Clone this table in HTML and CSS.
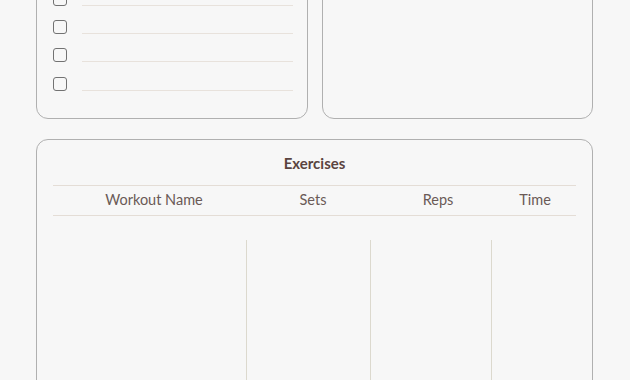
FILE: index.html
```html
<!DOCTYPE html>
<html lang="en">
<head>
<meta charset="utf-8">
<title>Workout Planner</title>
<link rel="stylesheet" href="styles.css">
</head>
<body>
<div class="page">
  <div class="top-row">
    <section class="card checklist">
      <div class="check-row"><span class="box"></span><span class="line"></span></div>
      <div class="check-row"><span class="box"></span><span class="line"></span></div>
      <div class="check-row"><span class="box"></span><span class="line"></span></div>
      <div class="check-row"><span class="box"></span><span class="line"></span></div>
    </section>
    <section class="card notes"></section>
  </div>
  <section class="card exercises">
    <h2 class="title">Exercises</h2>
    <div class="table-head">
      <div class="th">Workout Name</div>
      <div class="th">Sets</div>
      <div class="th">Reps</div>
      <div class="th">Time</div>
    </div>
    <div class="table-body">
      <div class="td"></div>
      <div class="td"></div>
      <div class="td"></div>
      <div class="td"></div>
    </div>
  </section>
</div>
</body>
</html>
```

FILE: styles.css
```css
html, body {
  margin: 0;
  padding: 0;
  background: #f7f7f7;
  overflow: hidden;
}
body {
  font-family: "Lato", "Noto Sans", sans-serif;
  color: #5b4642;
}
.page {
  width: 557px;
  padding-left: 36px;
  margin-top: -38px;
}
.top-row {
  display: grid;
  grid-template-columns: 1fr 1fr;
  gap: 14px;
}
.card {
  border: 1.5px solid #b0b0b0;
  border-radius: 12px;
  box-sizing: border-box;
}
.checklist {
  padding: 29px 14px 27px 16px;
  display: flex;
  flex-direction: column;
  gap: 14px;
}
.check-row {
  display: flex;
  align-items: flex-end;
  gap: 15px;
}
.check-row:last-child {
  margin-top: 1px;
}
.box {
  width: 14px;
  height: 14px;
  box-sizing: border-box;
  border: 1px solid #727272;
  border-radius: 3px;
  flex: none;
}
.line {
  flex: 1;
  border-bottom: 1.5px solid #e8e2dc;
}
.exercises {
  margin-top: 20px;
  padding: 13px 16px 0;
  height: 280px;
}
.title {
  margin: 0;
  text-align: center;
  font-size: 15px;
  line-height: 20px;
  font-weight: 700;
  color: #5a4440;
}
.table-head {
  margin-top: 12px;
  display: grid;
  grid-template-columns: 202px 116px 134px 60px;
  border-top: 1.5px solid #e4ddd6;
  border-bottom: 1.5px solid #e4ddd6;
  height: 31px;
  padding-bottom: 2px;
  box-sizing: border-box;
  align-items: center;
}
.th {
  text-align: center;
  font-size: 14.5px;
  color: #6a5a56;
}
.table-body {
  margin-top: 24px;
  display: grid;
  grid-template-columns: 193px 124px 121px 1fr;
  height: 200px;
}
.td + .td {
  border-left: 1px solid #dcd9ce;
}
```
